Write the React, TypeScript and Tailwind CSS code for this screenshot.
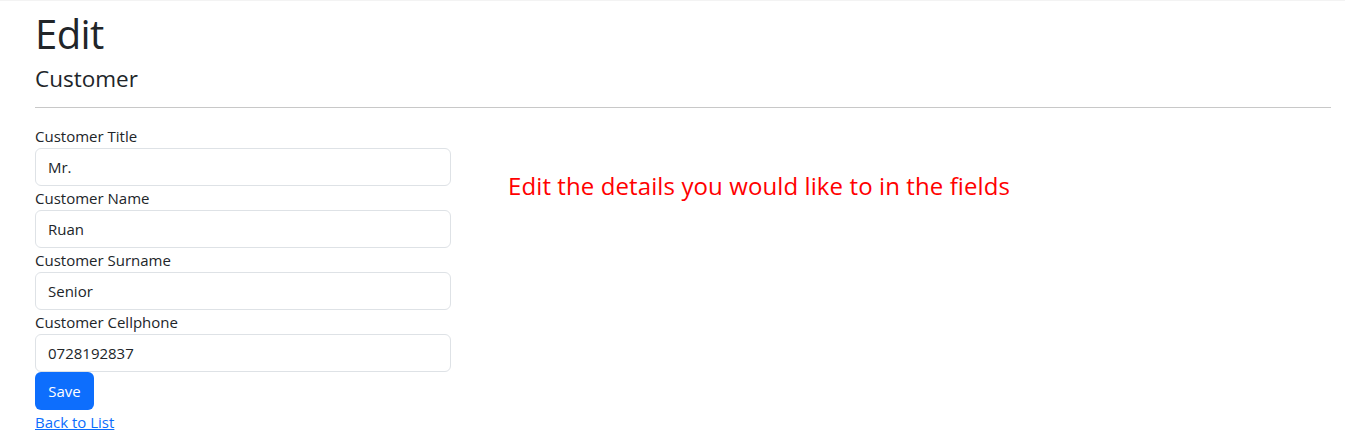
const fields = [
  { label: 'Customer Title', value: 'Mr.' },
  { label: 'Customer Name', value: 'Ruan' },
  { label: 'Customer Surname', value: 'Senior' },
  { label: 'Customer Cellphone', value: '0728192837' },
];

export default function App() {
  return (
    <div
      className="min-h-[445px] bg-white border-t border-[#f3f3f3] text-[#212529]"
      style={{ fontFamily: '"Open Sans", "Noto Sans", sans-serif' }}
    >
      <div className="ml-[35px] mr-[14px] pt-[9px]">
        <h1 className="text-[40px] leading-[48px] font-normal tracking-[-0.6px] mb-[6px]">Edit</h1>
        <h4 className="text-[22.5px] leading-[29px] font-normal">Customer</h4>
        <hr className="mt-[14px] mb-[16px] border-t border-[#c8c8c8]" />

        <div className="flex">
          <form className="w-[416px]" onSubmit={e => e.preventDefault()}>
            {fields.map(f => (
              <div key={f.label}>
                <label className="block text-[15px] leading-[24px]">{f.label}</label>
                <input
                  defaultValue={f.value}
                  className="block w-full h-[38px] px-[12px] text-[15px] text-[#212529] bg-white border border-[#dee2e6] rounded-[6px] outline-none"
                />
              </div>
            ))}
            <button
              type="submit"
              className="h-[38px] w-[59px] rounded-[6px] bg-[#0d6efd] text-white text-[15px]"
            >
              Save
            </button>
            <div className="leading-[24px]">
              <a href="#" className="text-[15px] text-[#0d6efd] underline">Back to List</a>
            </div>
          </form>

          <div className="ml-[57px] pt-[46px]">
            <p className="text-[24px] leading-[32px] text-[#ff0000] tracking-[0.1px]">
              Edit the details you would like to in the fields
            </p>
          </div>
        </div>
      </div>
    </div>
  );
}
